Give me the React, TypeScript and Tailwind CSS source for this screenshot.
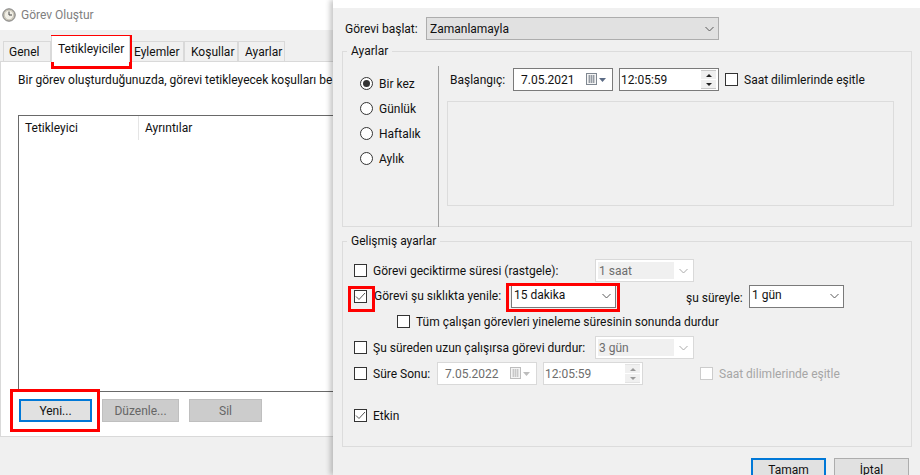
import type { ReactNode } from 'react'

const tabs = [
  { label: 'Genel', width: 'w-[48px] pl-[5px]' },
  { label: 'Tetikleyiciler', width: 'w-[79px] pl-[6px]' },
  { label: 'Eylemler', width: 'w-[54px] pl-[3px]' },
  { label: 'Koşullar', width: 'w-[54px] pl-[6px]' },
  { label: 'Ayarlar', width: 'w-[47px] pl-[6px]' },
]

function Chevron({ color = '#5a5a5a' }: { color?: string }) {
  return (
    <svg width="9" height="6" viewBox="0 0 9 6" fill="none" className="shrink-0">
      <path d="M0.5 1l4 4 4-4" stroke={color} strokeWidth="1" />
    </svg>
  )
}

function Check({ checked, disabled }: { checked?: boolean; disabled?: boolean }) {
  return (
    <span
      className={`flex h-[13px] w-[13px] shrink-0 items-center justify-center border ${
        disabled ? 'border-[#cccccc] bg-white' : 'border-[#333333] bg-white'
      }`}
    >
      {checked && (
        <svg width="11" height="11" viewBox="0 0 11 11" fill="none">
          <path d="M1 5.5l3 3L10 2" stroke="#555555" strokeWidth="1" />
        </svg>
      )}
    </span>
  )
}

function Radio({ label, selected }: { label: string; selected?: boolean }) {
  return (
    <div className="flex h-[25px] items-center gap-[6px]">
      <span className="flex h-[13px] w-[13px] items-center justify-center rounded-full border border-[#333333] bg-white">
        {selected && <span className="h-[7px] w-[7px] rounded-full bg-[#333333]" />}
      </span>
      <span>{label}</span>
    </div>
  )
}

function Select({ label, className }: { label: string; className: string }) {
  return (
    <div className={`flex h-[23px] items-center justify-between border border-[#7a7a7a] bg-white pl-[2px] pr-[4px] ${className}`}>
      <span className="-mt-[2px]">{label}</span>
      <Chevron />
    </div>
  )
}

function DisabledSelect({ label }: { label: string }) {
  return (
    <div className="flex h-[23px] w-[99px] items-center justify-between border border-[#d9d9d9] bg-white p-[2px] pr-[5px] text-[#6d6d6d]">
      <span className="flex h-full w-[76px] items-center bg-[#f0f0f0] pl-[1px]">{label}</span>
      <Chevron color="#aaaaaa" />
    </div>
  )
}

function Calendar({ faded }: { faded?: boolean }) {
  const c = faded ? '#bdbdbd' : '#7f8790'
  return (
    <svg width="20" height="13" viewBox="0 0 20 13" className="shrink-0">
      <rect x="0.5" y="0.5" width="10" height="11" fill="#f4f4f4" stroke={c} />
      <path d="M2 3h7M2 5h7M2 7h7M2 9h7M3.5 2v8M5.5 2v8M7.5 2v8" stroke={c} strokeWidth="0.7" />
      <path d="M13 5h7l-3.5 4z" fill={faded ? '#bdbdbd' : '#5b6b85'} />
    </svg>
  )
}

function DateField({ value, faded }: { value: string; faded?: boolean }) {
  return (
    <div
      className={`flex h-[23px] w-[100px] items-center justify-between border pl-[7px] pr-[6px] ${
        faded ? 'border-[#d9d9d9] bg-white text-[#6d6d6d]' : 'border-[#7a7a7a] bg-white'
      }`}
    >
      <span>{value}</span>
      <Calendar faded={faded} />
    </div>
  )
}

function TimeField({ value, faded }: { value: string; faded?: boolean }) {
  const arrow = faded ? '#9a9a9a' : '#222222'
  const btn = faded ? 'bg-[#f0f0f0] border-[#e3e3e3]' : 'bg-[#f0f0f0] border-[#c8c8c8]'
  return (
    <div
      className={`flex h-[23px] w-[100px] items-center justify-between border pl-[1px] pr-[2px] ${
        faded ? 'border-[#d9d9d9] bg-white text-[#6d6d6d]' : 'border-[#7a7a7a] bg-white'
      }`}
    >
      <span>{value}</span>
      <div className="flex w-[15px] flex-col gap-[1px]">
        <span className={`flex h-[9px] items-center justify-center border-t ${btn}`}>
          <span className="h-0 w-0 border-x-[3px] border-b-[3px] border-x-transparent" style={{ borderBottomColor: arrow }} />
        </span>
        <span className={`flex h-[9px] items-center justify-center border-b ${btn}`}>
          <span className="h-0 w-0 border-x-[3px] border-t-[3px] border-x-transparent" style={{ borderTopColor: arrow }} />
        </span>
      </div>
    </div>
  )
}

function GroupBox({ title, className, children }: { title: string; className: string; children: ReactNode }) {
  return (
    <div className={`relative border border-[#dcdcdc] ${className}`}>
      <span className="absolute -top-[9px] left-[4px] bg-[#f0f0f0] px-[4px] leading-[16px]">{title}</span>
      {children}
    </div>
  )
}

function FlatButton({ label, className }: { label: string; className: string }) {
  return <div className={`flex h-[23px] items-center justify-center border ${className}`}>{label}</div>
}

export default function App() {
  return (
    <div className="relative flex h-[475px] w-[920px] overflow-hidden bg-[#f0f0f0] text-[12px] leading-[16px] text-[#111111] [font-family:Roboto,sans-serif]">
      {/* left dialog */}
      <div className="w-[333px] shrink-0">
        <div className="flex h-[30px] items-center gap-[5px] bg-white pl-[2px]">
          <svg width="14" height="14" viewBox="0 0 14 14">
            <circle cx="7" cy="7" r="6.2" fill="#c9c5b8" stroke="#7a7a7a" />
            <circle cx="7" cy="7" r="4.2" fill="#f1efe6" />
            <path d="M7 3.5V7h3" stroke="#444444" fill="none" />
          </svg>
          <span className="text-[#808080]">Görev Oluştur</span>
        </div>
        <div className="flex h-[31px] items-end pl-[3px]">
          {tabs.map((tab, i) =>
            i === 1 ? (
              <div key={tab.label} className={`relative z-10 -mb-[1px] flex h-[26px] border-x border-[#d9d9d9] bg-white pt-[5px] ${tab.width}`}>
                {tab.label}
              </div>
            ) : (
              <div key={tab.label} className={`flex h-[20px] items-center border border-b-0 border-[#d9d9d9] bg-[#f0f0f0] ${tab.width}`}>
                {tab.label}
              </div>
            ),
          )}
        </div>
        <div className="h-[376px] border border-r-0 border-[#d9d9d9] bg-white pl-[17px]">
          <p className="mt-[10px] whitespace-nowrap">Bir görev oluşturduğunuzda, görevi tetikleyecek koşulları be</p>
          <div className="mt-[27px] h-[277px] border-y border-l border-[#696969]">
            <div className="flex h-[24px] items-center">
              <span className="w-[120px] border-r border-[#e5e5e5] pl-[6px] leading-[24px]">Tetikleyici</span>
              <span className="pl-[6px]">Ayrıntılar</span>
            </div>
          </div>
          <div className="mt-[7px] flex gap-[10px] pl-[1px]">
            <FlatButton label="Yeni..." className="w-[73px] border-2 border-[#0078d7] bg-[#e1e1e1]" />
            <FlatButton label="Düzenle..." className="w-[77px] border-[#bfbfbf] bg-[#cccccc] text-[#666666]" />
            <FlatButton label="Sil" className="w-[73px] border-[#bfbfbf] bg-[#cccccc] text-[#666666]" />
          </div>
        </div>
      </div>

      {/* right dialog */}
      <div className="relative w-[587px] shadow-[-3px_0_5px_rgba(0,0,0,0.22)]">
        <div className="h-[8px] bg-white" />
        <div className="h-[467px] bg-[#f0f0f0] pl-[9px] pr-[8px]">
          <div className="flex items-center pt-[9px]">
            <span className="ml-[3px] w-[81px]">Görevi başlat:</span>
            <div className="flex h-[23px] w-[293px] items-center justify-between border border-[#adadad] bg-[#e1e1e1] pl-[3px] pr-[4px]">
              <span>Zamanlamayla</span>
              <Chevron />
            </div>
          </div>

          <GroupBox title="Ayarlar" className="mt-[11px] flex h-[176px] w-[570px] pl-[17px] pt-[20px]">
            <div className="-mt-[6px] h-[161px] w-[79px] border-r border-[#a0a0a0] pt-[5px]">
              <Radio label="Bir kez" selected />
              <Radio label="Günlük" />
              <Radio label="Haftalık" />
              <Radio label="Aylık" />
            </div>
            <div className="-mt-[4px] ml-[8px]">
              <div className="flex items-center">
                <span className="ml-[3px] w-[63px]">Başlangıç:</span>
                <DateField value="7.05.2021" />
                <div className="ml-[6px]">
                  <TimeField value="12:05:59" />
                </div>
                <div className="ml-[6px] flex items-center gap-[6px]">
                  <Check />
                  <span>Saat dilimlerinde eşitle</span>
                </div>
              </div>
              <div className="mt-[10px] h-[105px] w-[447px] border border-[#dcdcdc]" />
            </div>
          </GroupBox>

          <GroupBox title="Gelişmiş ayarlar" className="mt-[14px] h-[206px] w-[570px] pl-[11px] pt-[16px]">
            <div className="flex h-[25px] items-center">
              <Check />
              <span className="ml-[6px] w-[222px] whitespace-nowrap">Görevi geciktirme süresi (rastgele):</span>
              <DisabledSelect label="1 saat" />
            </div>
            <div className="flex h-[26px] items-center">
              <Check checked />
              <span className="ml-[7px] w-[137px] whitespace-nowrap">Görevi şu sıklıkta yenile:</span>
              <Select label="15 dakika" className="w-[105px]" />
              <span className="ml-[70px] mt-[3px] w-[63px]">şu süreyle:</span>
              <Select label="1 gün" className="w-[95px]" />
            </div>
            <div className="flex h-[25px] items-center pl-[43px]">
              <Check />
              <span className="ml-[6px] whitespace-nowrap">Tüm çalışan görevleri yineleme süresinin sonunda durdur</span>
            </div>
            <div className="flex h-[27px] items-center">
              <Check />
              <span className="ml-[6px] w-[222px] whitespace-nowrap">Şu süreden uzun çalışırsa görevi durdur:</span>
              <DisabledSelect label="3 gün" />
            </div>
            <div className="flex h-[25px] items-center">
              <Check />
              <span className="ml-[6px] w-[64px] whitespace-nowrap">Süre Sonu:</span>
              <DateField value="7.05.2022" faded />
              <div className="ml-[6px]">
                <TimeField value="12:05:59" faded />
              </div>
              <div className="ml-[57px] flex items-center gap-[6px] text-[#a6a6a6]">
                <Check disabled />
                <span>Saat dilimlerinde eşitle</span>
              </div>
            </div>
            <div className="mt-[17px] flex h-[25px] items-center">
              <Check checked />
              <span className="ml-[6px]">Etkin</span>
            </div>
          </GroupBox>

          <div className="mt-[11px] flex justify-end gap-[8px] pr-[3px]">
            <FlatButton label="Tamam" className="w-[75px] border-2 border-[#0078d7] bg-[#e1e1e1]" />
            <FlatButton label="İptal" className="w-[75px] border-[#adadad] bg-[#e1e1e1]" />
          </div>
        </div>
      </div>

      {/* red highlights added on the screenshot */}
      <div className="absolute left-[51px] top-[35px] h-[34px] w-[81px] border-[3px] border-[#ff0000]" />
      <div className="absolute left-[10px] top-[389px] h-[43px] w-[90px] border-[3px] border-[#ff0000]" />
      <div className="absolute left-[348px] top-[286px] h-[26px] w-[27px] border-[3px] border-[#ff0000]" />
      <div className="absolute left-[506px] top-[283px] h-[29px] w-[114px] border-[3px] border-[#ff0000]" />
    </div>
  )
}
